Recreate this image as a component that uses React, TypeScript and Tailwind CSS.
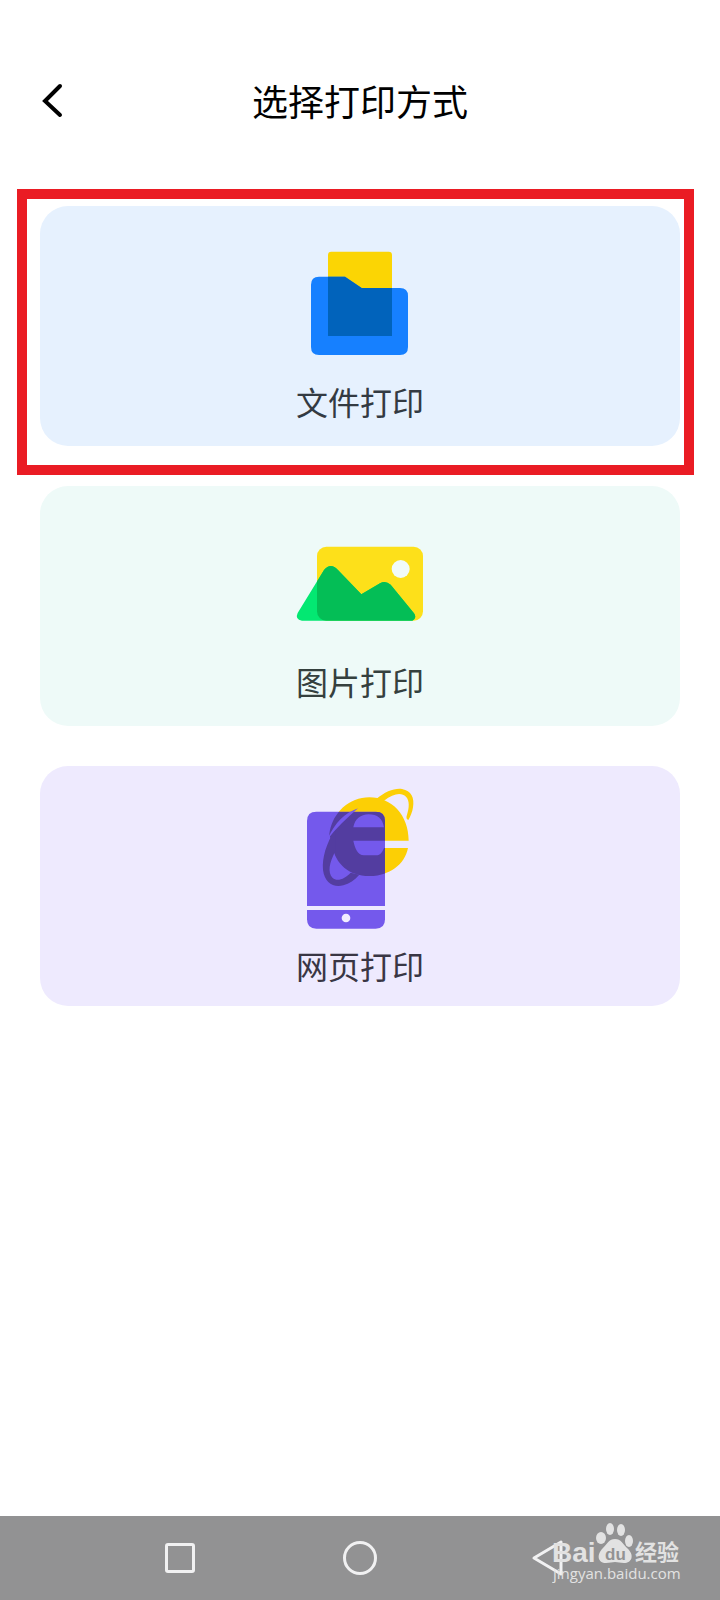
import React from "react";

const FileArt = () => (
  <svg viewBox="0 -72 480 528" className="h-44 w-40" aria-hidden="true">
    <rect x="144" y="65" width="192" height="200" rx="10" fill="#fbd504" />
    <path
      d="M117 140H195L245 174H360Q384 174 384 198V351Q384 375 360 375H117Q93 375 93 351V164Q93 140 117 140Z"
      fill="#1680ff"
    />
    <path d="M144 140H195L245 174H336V318H144Z" fill="#0163bb" />
  </svg>
);

const mountains =
  "M66 302Q44 298 53 279L132 150Q152 126 174 150L244 223L300 190Q316 180 332 194L402 280Q412 294 397 302Z";

const PictureArt = () => (
  <svg viewBox="0 -102 480 528" className="h-44 w-40" aria-hidden="true">
    <defs>
      <clipPath id="photo">
        <rect x="111" y="80" width="318" height="222" rx="28" />
      </clipPath>
    </defs>
    <rect x="111" y="80" width="318" height="222" rx="28" fill="#fde01a" />
    <path d={mountains} fill="#03e872" />
    <path d={mountains} fill="#04be56" clipPath="url(#photo)" />
    <circle cx="362" cy="147" r="27" fill="#f1fbf8" />
  </svg>
);

const Browser = () => (
  <>
    <path
      fillRule="evenodd"
      d="M148 192C156 128 208 82 268 82C335 82 386 135 386 212H220C224 232 232 256 252 256H288C302 256 308 244 312 234H384C374 284 328 318 268 318C206 318 166 280 158 230ZM220 172H312C308 146 292 133 266 133C242 133 224 148 220 172Z"
    />
    <path d="M288 88C316 64 344 54 366 57C394 62 404 84 399 112C397 126 392 138 385 150C379 148 378 142 381 134C388 112 389 92 378 80C364 66 340 70 312 92Z" />
    <path d="M166 178C138 222 126 264 129 300C134 338 160 354 190 346C208 341 224 330 238 314L212 308C196 326 172 336 158 324C142 308 148 278 166 244Z" />
  </>
);

const WebArt = () => (
  <svg viewBox="0 -12 480 540" className="h-45 w-40" aria-hidden="true">
    <defs>
      <clipPath id="screen">
        <path d="M109 125H287Q315 125 315 153V408H81V153Q81 125 109 125Z" />
      </clipPath>
    </defs>
    <g fill="#fccf05">
      <Browser />
    </g>
    <path d="M109 125H287Q315 125 315 153V408H81V153Q81 125 109 125Z" fill="#7459ec" />
    <path d="M81 420H315V448Q315 476 287 476H109Q81 476 81 448Z" fill="#7459ec" />
    <circle cx="198" cy="444" r="13" fill="#f1edff" />
    <g fill="#533da0" clipPath="url(#screen)">
      <Browser />
    </g>
    <path d="M234 115C196 128 164 158 144 206C168 176 198 146 234 115Z" fill="#7459ec" />
  </svg>
);

const options = [
  { label: "文件打印", Art: FileArt, style: "bg-[#e6f1fe] text-[#333a42]", marked: true },
  { label: "图片打印", Art: PictureArt, style: "bg-[#eefaf8] text-[#35403e]", marked: false },
  { label: "网页打印", Art: WebArt, style: "bg-[#eeeafe] text-[#393644]", marked: false },
];

const Watermark = () => (
  <svg
    viewBox="0 0 130 66"
    className="pointer-events-none absolute right-[38px] bottom-[14px] h-[66px] w-[130px] fill-[#e2e2e2]"
    role="img"
    aria-label="Baidu 经验"
  >
    <text x="0" y="42" className="font-['Liberation_Sans',sans-serif] text-[28px] font-bold">
      Bai
    </text>
    <ellipse cx="49" cy="18" rx="5" ry="6" />
    <ellipse cx="58" cy="9" rx="4" ry="6" />
    <ellipse cx="69" cy="10" rx="4" ry="6" />
    <ellipse cx="77" cy="21" rx="4" ry="6" />
    <path d="M63 19C69 19 71 24 75 28C83 35 80 43 72 43C68 43 66 42 63 42C60 42 58 43 54 43C46 43 44 35 51 28C55 24 57 19 63 19Z" />
    <text x="53" y="40" className="fill-[#929293] font-['Liberation_Sans',sans-serif] text-[17px] font-bold">
      du
    </text>
    <text x="83" y="40" className="font-['Noto_Sans_CJK_SC',sans-serif] text-[22px] font-bold">
      经验
    </text>
    <text x="1" y="59" className="font-['Open_Sans',sans-serif] text-[15px]">
      jingyan.baidu.com
    </text>
  </svg>
);

const App = () => {
  return (
    <div className="flex min-h-screen flex-col bg-white font-['Noto_Sans_CJK_SC',sans-serif]">
      <header className="grid grid-cols-[40px_1fr_40px] items-center px-8 pt-19 pb-[82px]">
        <button type="button" aria-label="返回" className="flex h-12 w-10 items-center justify-center">
          <svg viewBox="0 0 40 48" className="h-12 w-10" fill="none" stroke="#000" strokeWidth="4">
            <path d="M28 10L13 25L28 39" strokeLinecap="round" />
          </svg>
        </button>
        <h1 className="text-center text-[36px] leading-12 text-black">选择打印方式</h1>
      </header>

      <main className="flex flex-1 flex-col gap-10 px-10 pb-10">
        {options.map(({ label, Art, style, marked }) => (
          <div key={label} className="relative">
            <button
              type="button"
              className={`flex h-60 w-full flex-col items-center rounded-[28px] text-[32px] leading-[38px] ${style}`}
            >
              <Art />
              <span>{label}</span>
            </button>
            {marked && (
              <div className="pointer-events-none absolute -top-[17px] -right-[14px] -bottom-[29px] -left-[23px] border-10 border-[#ea1c24]" />
            )}
          </div>
        ))}
      </main>

      <nav className="relative grid h-[84px] grid-cols-3 place-items-center bg-[#929293] px-[12.5%]">
        <button type="button" aria-label="最近任务" className="flex justify-center">
          <span className="size-[30px] rounded-[3px] border-3 border-[#f1f1f2]" />
        </button>
        <button type="button" aria-label="主页" className="flex justify-center">
          <span className="size-[34px] rounded-full border-3 border-[#f1f1f2]" />
        </button>
        <button type="button" aria-label="后退">
          <svg viewBox="0 0 36 36" className="size-9 overflow-visible" fill="none" stroke="#f1f1f2" strokeWidth="3">
            <path d="M39 2V34L12 18Z" strokeLinejoin="round" />
          </svg>
        </button>
        <Watermark />
      </nav>
    </div>
  );
};

export default App;
